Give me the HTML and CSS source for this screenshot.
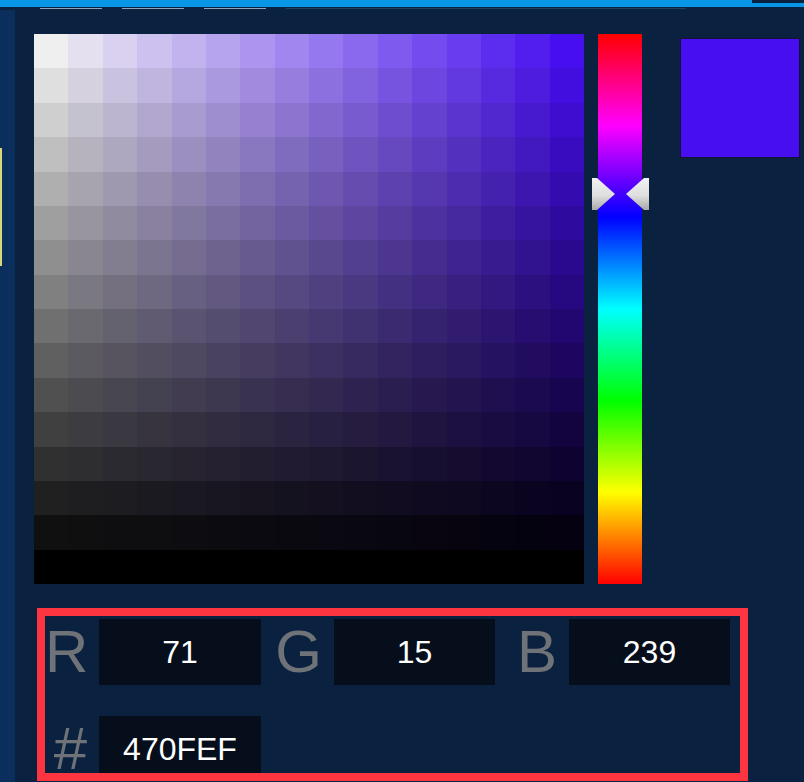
FILE: index.html
```html
<!DOCTYPE html>
<html lang="en">
<head>
  <meta charset="UTF-8">
  <meta name="viewport" content="width=device-width, initial-scale=1.0">
  <title>Color picker</title>
  <link rel="stylesheet" href="styles.css">
</head>
<body>
  <div class="topbar"><span class="topbar-corner"></span></div>
  <div class="tabline">
    <span class="tab-frag"></span>
    <span class="tab-frag"></span>
    <span class="tab-frag"></span>
    <span class="tab-frag faint"></span>
  </div>

  <div class="layout">
    <div class="sidebar"><span class="sidebar-mark"></span></div>

    <div class="picker">
      <div class="picker-top">
        <div class="sv-grid" id="svGrid"></div>

        <div class="hue">
          <svg class="hue-marker" width="57" height="32" viewBox="0 0 57 32">
            <defs>
              <linearGradient id="arrowFill" x1="0" y1="0" x2="0" y2="1">
                <stop offset="0" stop-color="#f2f2f2"/>
                <stop offset="0.55" stop-color="#dedede"/>
                <stop offset="1" stop-color="#a9a9a9"/>
              </linearGradient>
            </defs>
            <polygon points="0,0 5,0 23,16 5,32 0,32" fill="url(#arrowFill)"/>
            <polygon points="57,0 52,0 34,16 52,32 57,32" fill="url(#arrowFill)"/>
          </svg>
        </div>

        <div class="preview" id="preview"></div>
      </div>

      <div class="values">
        <label class="field-label" for="valR">R</label>
        <input class="field-value" id="valR" type="text" value="71">
        <label class="field-label" for="valG">G</label>
        <input class="field-value" id="valG" type="text" value="15">
        <label class="field-label" for="valB">B</label>
        <input class="field-value" id="valB" type="text" value="239">
        <label class="field-label" for="valHex">#</label>
        <input class="field-value" id="valHex" type="text" value="470FEF">
      </div>
    </div>
  </div>

  <script>
    // saturation / value swatches for the current hue
    const hue = 255;

    function hsvToRgb(h, s, v) {
      const c = v * s;
      const x = c * (1 - Math.abs((h / 60) % 2 - 1));
      const m = v - c;
      let r = 0, g = 0, b = 0;
      if (h < 60) { r = c; g = x; }
      else if (h < 120) { r = x; g = c; }
      else if (h < 180) { g = c; b = x; }
      else if (h < 240) { g = x; b = c; }
      else if (h < 300) { r = x; b = c; }
      else { r = c; b = x; }
      return [r + m, g + m, b + m].map(n => Math.round(n * 255));
    }

    const grid = document.getElementById("svGrid");
    for (let row = 0; row < 16; row++) {
      for (let col = 0; col < 16; col++) {
        const cell = document.createElement("div");
        const [r, g, b] = hsvToRgb(hue, col / 16, (15 - row) / 16);
        cell.className = "sv-cell";
        cell.style.backgroundColor = `rgb(${r}, ${g}, ${b})`;
        grid.appendChild(cell);
      }
    }
  </script>
</body>
</html>
```

FILE: styles.css
```css
body {
  margin: 0;
  width: 804px;
  height: 782px;
  overflow: hidden;
  background-color: #0a2140;
  font-family: "Liberation Sans", Arial, sans-serif;
}
.topbar {
  display: flex;
  height: 7px;
  background: #0896e6;
}
.topbar-corner {
  margin-left: auto;
  width: 52px;
  height: 3px;
  background: #0a2140;
}
.tabline {
  display: flex;
  align-items: center;
  gap: 20px;
  height: 3px;
  padding-left: 40px;
}
.tab-frag {
  width: 62px;
  height: 1px;
  background: #8ea4bb;
}
.tab-frag.faint {
  width: 400px;
  background: #21405f;
}
.layout {
  display: flex;
  height: 772px;
}
.sidebar {
  width: 15px;
  background: #0b2f5d;
}
.sidebar-mark {
  display: block;
  width: 2px;
  height: 118px;
  margin-top: 138px;
  background: #d9d57c;
}
.picker {
  padding: 24px 0 0 19px;
}
.picker-top {
  display: flex;
  align-items: flex-start;
}
.sv-grid {
  display: grid;
  grid-template-columns: repeat(16, 1fr);
  grid-template-rows: repeat(16, 1fr);
  width: 550px;
  height: 550px;
}
.hue {
  position: relative;
  width: 44px;
  height: 550px;
  margin-left: 14px;
  background: linear-gradient(to bottom, #ff0000 0%, #ff00ff 16.67%, #0000ff 33.33%, #00ffff 50%, #00ff00 66.67%, #ffff00 83.33%, #ff0000 100%);
}
.hue-marker {
  position: absolute;
  top: 144px;
  left: -6px;
}
.preview {
  width: 118px;
  height: 118px;
  margin: 4px 0 0 38px;
  border: 1px solid #15103c;
  background: #470fef;
}
.values {
  display: grid;
  grid-template-columns: 54px 162px 73px 161px 74px 161px;
  grid-auto-rows: 66px;
  row-gap: 31px;
  box-sizing: border-box;
  width: 711px;
  height: 173px;
  margin: 24px 0 0 3px;
  padding-top: 3px;
  border: 8px solid #fd3541;
  overflow: hidden;
}
.field-label {
  padding-right: 12px;
  color: #6f7378;
  font-size: 60px;
  line-height: 66px;
  text-align: right;
}
.field-value {
  box-sizing: border-box;
  width: 100%;
  height: 66px;
  margin: 0;
  padding: 0;
  border: none;
  outline: none;
  background: #050e1a;
  color: #fff;
  font-family: inherit;
  font-size: 32px;
  text-align: center;
}
```
